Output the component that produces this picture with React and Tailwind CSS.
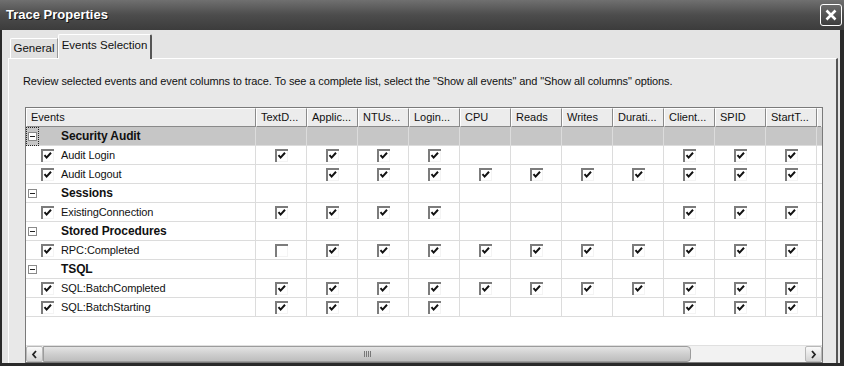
import React from "react";

const columns = [
  "TextD...",
  "Applic...",
  "NTUs...",
  "Login...",
  "CPU",
  "Reads",
  "Writes",
  "Durati...",
  "Client...",
  "SPID",
  "StartT...",
];

// 1 = checked, 0 = empty box, null = no box
const rows = [
  { type: "group", name: "Security Audit", selected: true },
  { type: "event", name: "Audit Login", cells: [1, 1, 1, 1, null, null, null, null, 1, 1, 1] },
  { type: "event", name: "Audit Logout", cells: [null, 1, 1, 1, 1, 1, 1, 1, 1, 1, 1] },
  { type: "group", name: "Sessions" },
  { type: "event", name: "ExistingConnection", cells: [1, 1, 1, 1, null, null, null, null, 1, 1, 1] },
  { type: "group", name: "Stored Procedures" },
  { type: "event", name: "RPC:Completed", cells: [0, 1, 1, 1, 1, 1, 1, 1, 1, 1, 1] },
  { type: "group", name: "TSQL" },
  { type: "event", name: "SQL:BatchCompleted", cells: [1, 1, 1, 1, 1, 1, 1, 1, 1, 1, 1] },
  { type: "event", name: "SQL:BatchStarting", cells: [1, 1, 1, 1, null, null, null, null, 1, 1, 1] },
];

function CheckBox({ checked }) {
  return (
    <svg width="13" height="13" viewBox="0 0 13 13" className="shrink-0">
      <rect x="0" y="0" width="13" height="13" fill="#f4f4f4" />
      <rect x="0" y="0" width="13" height="2" fill="#7c7c7c" />
      <rect x="0" y="0" width="2" height="13" fill="#7c7c7c" />
      <rect x="2" y="2" width="10" height="10" fill="#ffffff" />
      {checked && (
        <path d="M3.5 6.2 L5.6 8.6 L10 3.8" fill="none" stroke="#111" strokeWidth="2" />
      )}
    </svg>
  );
}

function MinusBox() {
  return (
    <svg width="9" height="9" viewBox="0 0 9 9" className="shrink-0">
      <rect x="0.5" y="0.5" width="8" height="8" fill="#fff" stroke="#8a8a8a" />
      <path d="M2 4.5 H7" stroke="#222" strokeWidth="1" />
    </svg>
  );
}

function Grid() {
  return (
    <div className="w-[798px] h-[256px] border border-[#7a7a7a] bg-white flex flex-col ml-[2px] mt-[19px]">
      {/* header */}
      <div className="flex h-[19px] bg-[#ececec]">
        <div className="w-[230px] h-full border-t border-l border-white border-r border-b border-r-[#8a8a8a] border-b-[#8a8a8a] px-[4px] flex items-center text-[11px] text-[#111]">
          Events
        </div>
        {columns.map((c) => (
          <div
            key={c}
            className="w-[51px] h-full border-t border-l border-white border-r border-b border-r-[#8a8a8a] border-b-[#8a8a8a] px-[4px] flex items-center text-[11px] text-[#111] whitespace-nowrap overflow-hidden"
          >
            {c}
          </div>
        ))}
        <div className="w-[4px] h-full border-t border-l border-white border-b border-b-[#8a8a8a]" />
      </div>

      {rows.map((r) => (
        <div
          key={r.name}
          className={`flex h-[19px] border-b border-[#dcdcdc] ${r.selected ? "bg-[#c6c6c6]" : "bg-white"}`}
        >
          <div className="w-[230px] h-full border-r border-[#dcdcdc] flex items-center">
            {r.type === "group" ? (
              <>
                <div
                  className={`ml-[1px] w-[11px] h-[17px] flex items-center justify-center ${r.selected ? "outline-1 outline-dotted outline-[#222]" : ""}`}
                >
                  <MinusBox />
                </div>
                <span className="ml-[23px] text-[12px] font-bold text-[#111] tracking-[-0.1px]">{r.name}</span>
              </>
            ) : (
              <>
                <div className="ml-[15px]">
                  <CheckBox checked />
                </div>
                <span className="ml-[7px] text-[11px] tracking-[-0.1px] text-[#111]">{r.name}</span>
              </>
            )}
          </div>
          {columns.map((c, i) => {
            const v = r.cells ? r.cells[i] : null;
            return (
              <div
                key={c}
                className="w-[51px] h-full border-r border-[#dcdcdc] flex items-center justify-center"
              >
                {v !== null && <CheckBox checked={v === 1} />}
              </div>
            );
          })}
        </div>
      ))}

      <div className="flex-1" />

      {/* horizontal scrollbar */}
      <div className="h-[17px] flex bg-[#f2f2f2] border-t border-[#e0e0e0]">
        <div className="w-[17px] h-full bg-gradient-to-b from-[#fafafa] to-[#d4d4d4] border border-[#b8b8b8] rounded-[2px] flex items-center justify-center">
          <svg width="7" height="9" viewBox="0 0 7 9">
            <path d="M5 1 L2 4.5 L5 8" fill="none" stroke="#222" strokeWidth="1.8" />
          </svg>
        </div>
        <div className="flex-1 flex">
          <div className="w-[648px] h-full bg-gradient-to-b from-[#e4e4e4] via-[#cfcfcf] to-[#bdbdbd] border border-[#9c9c9c] rounded-r-[4px] flex items-center justify-center">
            <div className="flex gap-[1px]">
              <div className="w-[1px] h-[6px] bg-[#777]" />
              <div className="w-[1px] h-[6px] bg-[#777]" />
              <div className="w-[1px] h-[6px] bg-[#777]" />
              <div className="w-[1px] h-[6px] bg-[#777]" />
            </div>
          </div>
        </div>
        <div className="w-[17px] h-full bg-gradient-to-b from-[#fafafa] to-[#d4d4d4] border border-[#b8b8b8] rounded-[2px] flex items-center justify-center">
          <svg width="7" height="9" viewBox="0 0 7 9">
            <path d="M2 1 L5 4.5 L2 8" fill="none" stroke="#222" strokeWidth="1.8" />
          </svg>
        </div>
      </div>
    </div>
  );
}

export default function App() {
  return (
    <div className="w-[844px] h-[366px] bg-[#2a2a2a] flex flex-col overflow-hidden font-['Liberation_Sans',Arial,sans-serif]">
      {/* title bar */}
      <div className="h-[30px] shrink-0 flex items-center justify-between pl-[6px] pr-[2px] bg-gradient-to-b from-[#707070] via-[#4c4c4c] to-[#3c3c3c]">
        <span className="text-[13px] font-bold text-white [text-shadow:1px_1px_0_#111]">
          Trace Properties
        </span>
        <div className="w-[22px] h-[22px] rounded-[3px] border border-white bg-gradient-to-b from-[#6a6a6a] to-[#3e3e3e] flex items-center justify-center">
          <svg width="14" height="14" viewBox="0 0 14 14">
            <path d="M2.5 2.5 L11.5 11.5 M11.5 2.5 L2.5 11.5" stroke="#fff" strokeWidth="2.6" />
          </svg>
        </div>
      </div>

      {/* body */}
      <div className="flex-1 ml-[2px] mr-[4px] mb-[3px] bg-[#e4e4e4] pt-[4px] pl-[6px] pr-[2px] flex flex-col">
        {/* tabs */}
        <div className="flex items-end h-[24px] pl-[2px] relative z-10">
          <div className="h-[20px] w-[48px] bg-[#e0e0e0] border-t border-l border-white border-r border-r-[#9a9a9a] rounded-tl-[2px] flex items-center justify-center text-[11.5px] text-[#111]">
            General
          </div>
          <div className="h-[25px] w-[94px] -mb-px bg-[#e8e8e8] border-t border-l border-white border-r-2 border-r-[#555] rounded-t-[2px] flex items-center justify-center text-[11.5px] text-[#111] pb-[3px]">
            Events Selection
          </div>
        </div>

        {/* panel */}
        <div className="flex-1 bg-[#e8e8e8] border-t border-l border-white border-r-2 border-r-[#555] pt-[16px] pl-[14px]">
          <div className="text-[11px] tracking-[-0.1px] text-[#111] leading-[13px]">
            Review selected events and event columns to trace. To see a complete list, select the "Show all events" and "Show all columns" options.
          </div>
          <Grid />
        </div>
      </div>
    </div>
  );
}
